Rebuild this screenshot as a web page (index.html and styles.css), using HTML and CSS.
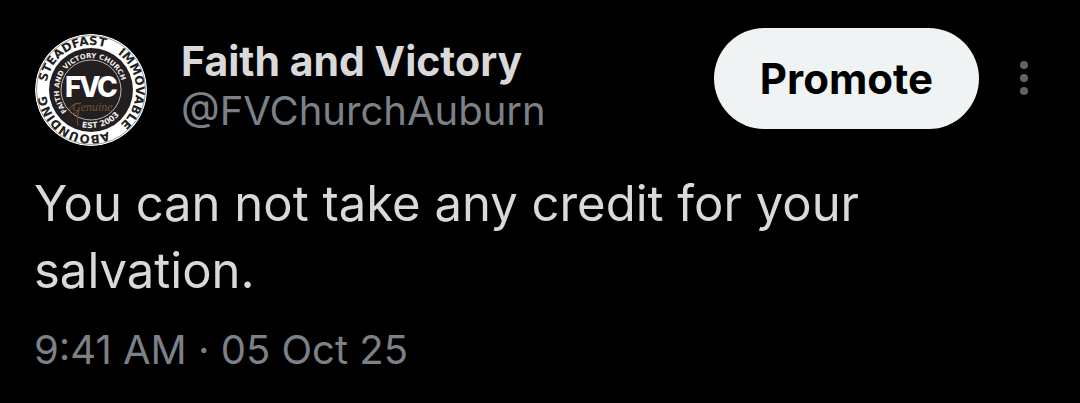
FILE: index.html
```html
<!DOCTYPE html>
<html lang="en">
<head>
<meta charset="utf-8">
<meta name="viewport" content="width=device-width, initial-scale=1">
<title>Faith and Victory</title>
<link rel="stylesheet" href="styles.css">
</head>
<body>
<article class="post">
  <header class="post-header">
    <a class="avatar" href="#profile" aria-label="Faith and Victory profile">
      <svg class="logo" viewBox="-56 -56 112 112" aria-hidden="true">
        <defs>
          <path id="outer" d="M-45 0A45 45 0 1 1 45 0A45 45 0 1 1 -45 0"/>
          <path id="inner" d="M0 32A32 32 0 1 1 0 -32A32 32 0 1 1 0 32"/>
          <path id="lower" d="M-38 0A38 38 0 0 0 38 0"/>
        </defs>
        <circle r="56" fill="#fff"/>
        <circle r="54.5" fill="none" stroke="#555" stroke-width=".6"/>
        <circle r="42" fill="#231f20"/>
        <circle r="30" fill="none" stroke="#ddd" stroke-width=".8"/>
        <g class="ring-text">
          <text><textPath href="#outer" startOffset="8">STEADFAST</textPath></text>
          <text><textPath href="#outer" startOffset="99">IMMOVABLE</textPath></text>
          <text><textPath href="#outer" startOffset="194">ABOUNDING</textPath></text>
        </g>
        <g class="inner-text">
          <text><textPath href="#inner" startOffset="27">FAITH AND VICTORY CHURCH</textPath></text>
          <text class="founded"><textPath href="#lower" startOffset="50">EST 2003</textPath></text>
        </g>
        <path d="M-26 -15H26V10H-26Z" fill="#231f20"/>
        <text class="monogram" x="-26 -12 6" y="7">FVC</text>
        <text class="script" x="-19" y="21">Genuine</text>
        <path d="M-10 13Q-23 14 -21 22Q-17 26 -12 20Q-15 28 -13 36" fill="none" stroke="#765334"/>
      </svg>
    </a>
    <div class="names">
      <a class="name" href="#profile">Faith and Victory</a>
      <a class="handle" href="#profile">@FVChurchAuburn</a>
    </div>
    <button class="promote" type="button">Promote</button>
    <button class="more" type="button" aria-label="More options">
      <svg class="dots" viewBox="0 0 8 34" aria-hidden="true"><circle cx="4" cy="4" r="4"/><circle cx="4" cy="17" r="4"/><circle cx="4" cy="30" r="4"/></svg>
    </button>
  </header>
  <p class="message">You can not take any credit for your salvation.</p>
  <time class="timestamp" datetime="2025-10-05T09:41">9:41 AM · 05 Oct 25</time>
</article>
</body>
</html>
```
FILE: styles.css
```css
* { box-sizing: border-box; }
body { margin: 0; background: #000; color: #d9d9d9; font-family: Inter, "Liberation Sans", sans-serif; }
a { color: inherit; text-decoration: none; }
.post { padding: 28px 34px 0; }
.post-header { display: flex; align-items: flex-start; }
.avatar { flex: none; margin: 6px 0 0 1px; }
.logo { display: block; width: 112px; height: 112px; border-radius: 50%; }
.names { display: flex; flex-direction: column; flex: 1; min-width: 0; margin: 8px 0 0 34px; font-size: 41px; line-height: 50px; white-space: nowrap; }
.name { font-weight: 700; }
.handle { color: #7c8087; font-size: 40px; }
button { border: 0; padding: 0; font: inherit; cursor: pointer; }
.promote { padding: 25px 46px; border-radius: 51px; background: #eff3f4; color: #000; font-size: 42px; font-weight: 700; line-height: 51px; }
.more { margin: 33px 18px 0 41px; background: none; }
.dots { display: block; width: 8px; height: 34px; fill: #626262; }
.message { margin: 24px 0 0; font-size: 49px; line-height: 67px; }
.timestamp { display: block; margin-top: 21px; color: #7c8087; font-size: 40px; line-height: 50px; }
.ring-text { font: 700 12px "DejaVu Sans", sans-serif; fill: #231f20; }
.inner-text { font: 700 7px "DejaVu Sans", sans-serif; fill: #eee; }
.founded { font-size: 8px; }
.monogram { font: 800 28px Inter, sans-serif; fill: #fff; }
.script { font: italic 12px "Liberation Serif", serif; fill: #765334; }
```
